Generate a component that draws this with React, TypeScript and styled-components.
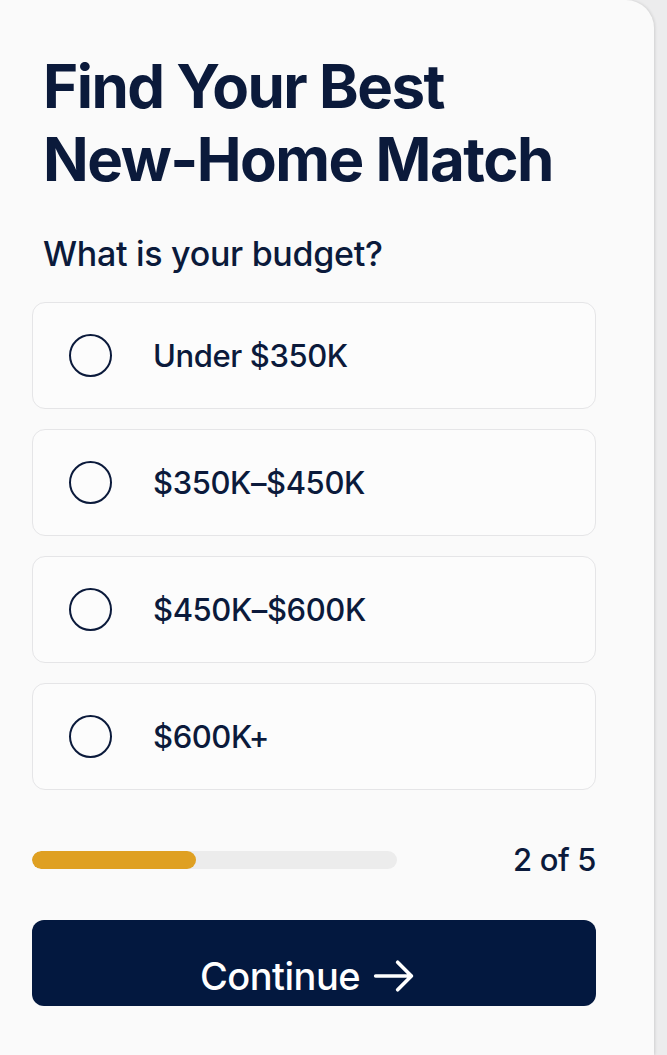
import React from 'react';
import styled, { createGlobalStyle } from 'styled-components';

const GlobalStyle = createGlobalStyle`
  html, body {
    margin: 0;
    padding: 0;
    background: #ececed;
  }
  body {
    font-family: Inter, "Liberation Sans", sans-serif;
    color: #0b1a3b;
  }
`;

const budgetOptions = ['Under $350K', '$350K–$450K', '$450K–$600K', '$600K+'];

const step = 2;
const totalSteps = 5;

const App = () => {
  return (
    <>
      <GlobalStyle />
      <Page>
        <Card>
          <Title>
            Find Your Best
            <br />
            New-Home Match
          </Title>
          <Question>What is your budget?</Question>
          <OptionList>
            {budgetOptions.map((label) => (
              <Option key={label} type="button">
                <Radio />
                <OptionLabel>{label}</OptionLabel>
              </Option>
            ))}
          </OptionList>
          <ProgressRow>
            <Track>
              <Fill style={{ width: `${(step / totalSteps) * 100 + 5}%` }} />
            </Track>
            <StepCount>
              {step} of {totalSteps}
            </StepCount>
          </ProgressRow>
          <ContinueButton type="button">
            Continue
            <Arrow viewBox="0 0 24 24">
              <path d="M2 12h19.5M14 4.5l7.5 7.5-7.5 7.5" />
            </Arrow>
          </ContinueButton>
        </Card>
      </Page>
    </>
  );
};

export default App;

const Page = styled.div`
  display: flex;
  min-height: 1055px;
  padding-right: 13px;
`;

const Card = styled.div`
  width: 654px;
  box-sizing: border-box;
  padding: 50px 58px 40px 32px;
  background: #fafafa;
  border-radius: 0 28px 0 0;
  box-shadow: 1px 0 3px rgba(0, 0, 0, 0.12);
`;

const Title = styled.h1`
  margin: 0 0 0 11px;
  font-size: 60px;
  line-height: 73px;
  font-weight: 700;
  letter-spacing: -1.5px;
  color: #0b1a3b;
`;

const Question = styled.h2`
  margin: 39px 0 0 11px;
  font-size: 34px;
  line-height: 38px;
  font-weight: 500;
  letter-spacing: -0.3px;
  color: #0b1a3b;
`;

const OptionList = styled.div`
  display: flex;
  flex-direction: column;
  gap: 20px;
  margin-top: 29px;
`;

const Option = styled.button`
  display: flex;
  align-items: center;
  gap: 41px;
  height: 107px;
  padding: 0 0 0 36px;
  background: #fcfcfc;
  border: 1.5px solid #e5e5e7;
  border-radius: 13px;
  font-family: inherit;
  cursor: pointer;
  text-align: left;
`;

const Radio = styled.span`
  width: 43px;
  height: 43px;
  box-sizing: border-box;
  border: 2.8px solid #0b1a3b;
  border-radius: 50%;
  flex-shrink: 0;
`;

const OptionLabel = styled.span`
  font-size: 31px;
  font-weight: 500;
  letter-spacing: -0.4px;
  color: #0b1a3b;
`;

const ProgressRow = styled.div`
  display: flex;
  align-items: center;
  justify-content: space-between;
  margin-top: 51px;
`;

const Track = styled.div`
  width: 365px;
  height: 18px;
  border-radius: 9px;
  background: #ececec;
  overflow: hidden;
`;

const Fill = styled.div`
  height: 100%;
  border-radius: 9px;
  background: #dfa022;
`;

const StepCount = styled.span`
  font-size: 31px;
  font-weight: 500;
  letter-spacing: -0.4px;
  color: #0b1a3b;
`;

const ContinueButton = styled.button`
  display: flex;
  align-items: center;
  justify-content: center;
  gap: 12px;
  width: 100%;
  height: 86px;
  margin-top: 42px;
  padding: 26px 12px 0 0;
  border: none;
  border-radius: 12px;
  background: #03183f;
  color: #ffffff;
  font-family: inherit;
  font-size: 38px;
  font-weight: 500;
  letter-spacing: -0.5px;
  cursor: pointer;
`;

const Arrow = styled.svg`
  width: 44px;
  height: 44px;
  fill: none;
  stroke: #ffffff;
  stroke-width: 2;
  stroke-linecap: round;
  stroke-linejoin: round;
`;
